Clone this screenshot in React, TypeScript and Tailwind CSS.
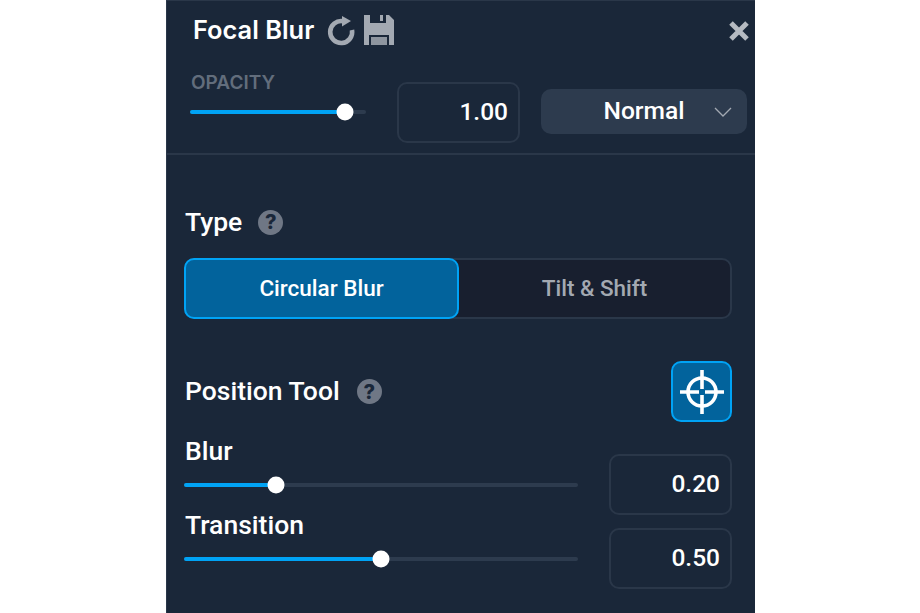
function HelpIcon() {
  return (
    <span className="flex h-[25px] w-[25px] items-center justify-center rounded-full bg-[#6f7785] font-['Inter',sans-serif] text-[20px] font-extrabold leading-none text-[#1a2739]">
      ?
    </span>
  );
}

function Slider({ fill, width }: { fill: number; width: number }) {
  return (
    <div className="relative h-[4px] rounded-full bg-[#2d3b4e]" style={{ width }}>
      <div className="h-full rounded-full bg-[#00a3f5]" style={{ width: fill }} />
      <div
        className="absolute top-1/2 h-[17px] w-[17px] -translate-x-1/2 -translate-y-1/2 rounded-full bg-white"
        style={{ left: fill }}
      />
    </div>
  );
}

function NumberBox({ value }: { value: string }) {
  return (
    <div className="flex h-[61px] w-[123px] items-center justify-end rounded-[10px] border-2 border-[#2a3749] pr-[10px] font-['Roboto',sans-serif] text-[24.5px] font-medium text-white">
      {value}
    </div>
  );
}

function SliderRow({ label, fill, value }: { label: string; fill: number; value: string }) {
  return (
    <div className="flex h-[74px] items-start justify-between">
      <div className="flex flex-col">
        <div className="ml-px h-[29px] text-[26.5px] font-medium leading-[27px] text-white">{label}</div>
        <div className="mt-[16px] translate-y-px">
          <Slider fill={fill} width={394} />
        </div>
      </div>
      <div className="mt-[17px]">
        <NumberBox value={value} />
      </div>
    </div>
  );
}

function ReloadIcon() {
  return (
    <svg width="30" height="30" viewBox="0 0 30 30" fill="none" className="text-[#a3a9b2]">
      <path d="M17 5.2A11 11 0 1 0 26 14" stroke="currentColor" strokeWidth="4.6" />
      <path d="M16 0l9 5-9 5.5Z" fill="currentColor" />
    </svg>
  );
}

function SaveIcon() {
  return (
    <svg width="30" height="30" viewBox="0 0 30 30" className="text-[#a3a9b2]">
      <path
        fill="currentColor"
        fillRule="evenodd"
        d="M0 0h25l5 5v25H0ZM6 0v8h16V0h-3v6h-3V0ZM5 20v10h20V20Z"
      />
      <rect x="7" y="22" width="16" height="8" fill="#a3a9b2" opacity="0.85" />
    </svg>
  );
}

function TargetIcon() {
  return (
    <svg width="46" height="46" viewBox="0 0 46 46" fill="none" stroke="white">
      <circle cx="23" cy="23" r="14" strokeWidth="3.6" />
      <path d="M23 1v19M23 26v19M1 23h19M26 23h19" strokeWidth="3.6" />
    </svg>
  );
}

function CloseIcon() {
  return (
    <svg width="20" height="20" viewBox="0 0 20 20" fill="none" stroke="#b5bac1" strokeWidth="5">
      <path d="M2 2l16 16M18 2L2 18" />
    </svg>
  );
}

function ChevronIcon() {
  return (
    <svg width="18" height="10" viewBox="0 0 18 10" fill="none" stroke="#a3a9b2" strokeWidth="1.3" className="absolute right-[15px]">
      <path d="M1 1l8 8 8-8" />
    </svg>
  );
}

export default function App() {
  return (
    <div className="min-h-[613px] w-[920px] overflow-hidden bg-white font-['Roboto',sans-serif]">
      <div className="ml-[166px] h-[613px] w-[589px] border-t border-l border-[#2a3749] bg-[#1a2739]">
        {/* header */}
        <div className="flex h-[58px] items-center pl-[26px] pr-[6px]">
          <span className="font-['Inter',sans-serif] text-[25.4px] font-semibold text-white">Focal Blur</span>
          <div className="ml-[12px] mt-[2px]">
            <ReloadIcon />
          </div>
          <div className="ml-[8px] -mt-[1px]">
            <SaveIcon />
          </div>
          <div className="ml-auto mt-[1px]">
            <CloseIcon />
          </div>
        </div>

        {/* opacity row */}
        <div className="flex h-[96px] items-start border-b-2 border-[#2a3749] pl-[23px] pr-[7px]">
          <div className="w-[207px] pt-[14px]">
            <div className="ml-px h-[20px] font-['Inter',sans-serif] text-[19px] font-semibold leading-[20px] text-[#626d7c]">
              OPACITY
            </div>
            <div className="mt-[17px]">
              <Slider fill={155} width={176} />
            </div>
          </div>
          <div className="mt-[23px]">
            <NumberBox value="1.00" />
          </div>
          <div className="relative ml-[21px] mt-[30px] flex h-[45px] w-[206px] items-center justify-center rounded-[10px] bg-[#2d3b4e] text-[24.6px] font-medium text-white">
            Normal
            <ChevronIcon />
          </div>
        </div>

        <div className="pl-[17px] pr-[22px]">
          {/* type */}
          <div className="mt-[49px] flex h-[36px] items-center gap-[16px] pl-px">
            <span className="text-[26.5px] font-medium text-white">Type</span>
            <HelpIcon />
          </div>
          <div className="mt-[18px] flex h-[61px] w-[548px] rounded-[10px] border-2 border-[#2a3749] bg-[#181f2f]">
            <div className="-my-[2px] -ml-[2px] flex w-[275px] items-center justify-center rounded-[10px] border-2 border-[#00a3f5] bg-[#02639c] text-[22.5px] font-medium text-white">
              Circular Blur
            </div>
            <div className="flex flex-1 items-center justify-center text-[22.5px] font-medium text-[#a3a9b2]">
              Tilt &amp; Shift
            </div>
          </div>

          {/* position tool */}
          <div className="mt-[42px] flex h-[61px] w-[548px] items-center justify-between">
            <div className="flex items-center gap-[17px] pl-px">
              <span className="-translate-y-px text-[26.5px] font-medium text-white">Position Tool</span>
              <HelpIcon />
            </div>
            <div className="flex h-[61px] w-[61px] items-center justify-center rounded-[10px] border-2 border-[#00a3f5] bg-[#02639c]">
              <TargetIcon />
            </div>
          </div>

          {/* sliders */}
          <div className="mt-[15px] flex w-[548px] flex-col">
            <SliderRow label="Blur" fill={92} value="0.20" />
            <SliderRow label="Transition" fill={197} value="0.50" />
          </div>
        </div>
      </div>
    </div>
  );
}
